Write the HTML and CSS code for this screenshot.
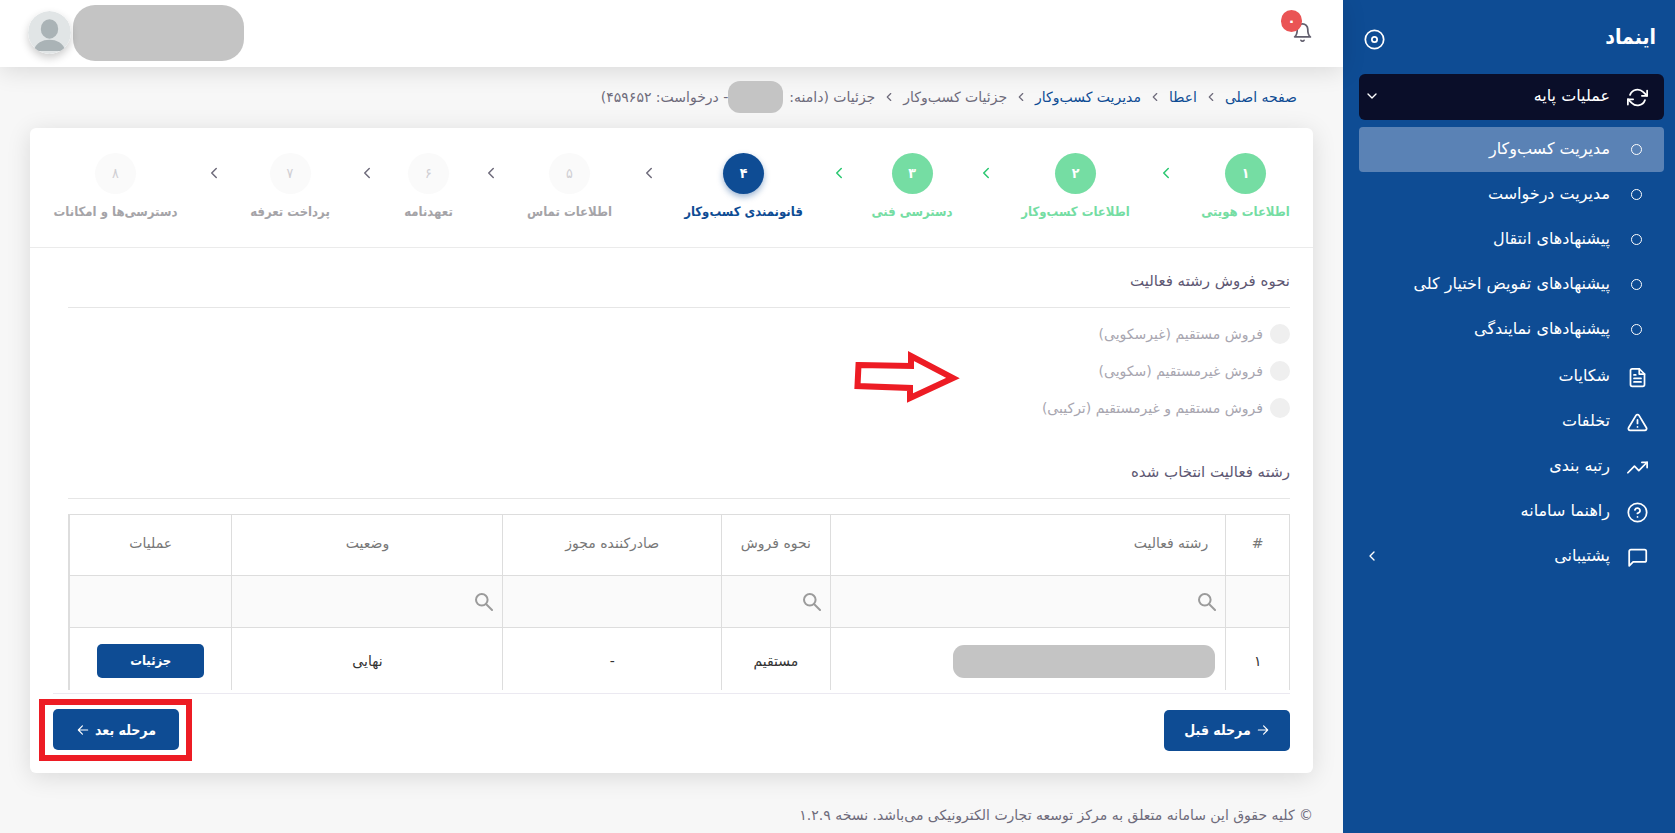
FILE: index.html
```html
<!DOCTYPE html>
<html lang="fa" dir="rtl">
<head>
<meta charset="utf-8">
<meta name="viewport" content="width=device-width, initial-scale=1">
<title>اینماد</title>
<link rel="stylesheet" href="styles.css">
</head>
<body>
<svg class="sprite" aria-hidden="true">
  <symbol id="chevron" viewBox="0 0 24 24"><polyline points="15 18 9 12 15 6"/></symbol>
  <symbol id="search" viewBox="0 0 18 18"><circle cx="6.800" cy="6.800" r="5.800"/><path d="M11 11 17 17"/></symbol>
</svg>
<div class="app">
  <aside class="sidebar">
    <div class="brand">
      <h1 class="brand-name">اینماد</h1>
      <button class="pin" type="button" aria-label="سنجاق منو">
        <svg class="icon" viewBox="0 0 24 24"><circle cx="12" cy="12" r="10.5"/><circle cx="12" cy="12" r="3"/></svg>
      </button>
    </div>
    <nav>
      <ul class="menu">
        <li>
          <a class="item open" href="#">
            <svg class="icon" viewBox="0 0 24 24"><polyline points="23 4 23 10 17 10"/><polyline points="1 20 1 14 7 14"/><path d="M3.51 9a9 9 0 0 1 14.85-3.36L23 10M1 14l4.64 4.36A9 9 0 0 0 20.49 15"/></svg>
            <span>عملیات پایه</span>
            <svg class="caret down" viewBox="0 0 24 24"><use href="#chevron"/></svg>
          </a>
          <ul class="submenu">
            <li><a class="item active" href="#"><i class="dot"></i><span>مدیریت کسب‌وکار</span></a></li>
            <li><a class="item" href="#"><i class="dot"></i><span>مدیریت درخواست</span></a></li>
            <li><a class="item" href="#"><i class="dot"></i><span>پیشنهادهای انتقال</span></a></li>
            <li><a class="item" href="#"><i class="dot"></i><span>پیشنهادهای تفویض اختیار کلی</span></a></li>
            <li><a class="item" href="#"><i class="dot"></i><span>پیشنهادهای نمایندگی</span></a></li>
          </ul>
        </li>
        <li><a class="item" href="#"><svg class="icon" viewBox="0 0 24 24"><path d="M14 2H6a2 2 0 0 0-2 2v16a2 2 0 0 0 2 2h12a2 2 0 0 0 2-2V8z"/><polyline points="14 2 14 8 20 8"/><path d="M16 13H8M16 17H8M10 9H8"/></svg><span>شکایات</span></a></li>
        <li><a class="item" href="#"><svg class="icon" viewBox="0 0 24 24"><path d="M10.29 3.86 1.82 18a2 2 0 0 0 1.71 3h16.94a2 2 0 0 0 1.71-3L13.71 3.86a2 2 0 0 0-3.42 0z"/><path d="M12 9v4M12 17h.01"/></svg><span>تخلفات</span></a></li>
        <li><a class="item" href="#"><svg class="icon" viewBox="0 0 24 24"><polyline points="23 6 13.5 15.5 8.5 10.5 1 18"/><polyline points="17 6 23 6 23 12"/></svg><span>رتبه بندی</span></a></li>
        <li><a class="item" href="#"><svg class="icon" viewBox="0 0 24 24"><circle cx="12" cy="12" r="10.5"/><path d="M9.09 9a3 3 0 0 1 5.83 1c0 2-3 3-3 3M12 17h.01"/></svg><span>راهنما سامانه</span></a></li>
        <li><a class="item" href="#"><svg class="icon" viewBox="0 0 24 24"><path d="M22 15a2 2 0 0 1-2 2H7l-4.500 4.500V5a2 2 0 0 1 2-2h15.500a2 2 0 0 1 2 2z"/></svg><span>پشتیبانی</span><svg class="caret" viewBox="0 0 24 24"><use href="#chevron"/></svg></a></li>
      </ul>
    </nav>
  </aside>

  <div class="page">
    <header class="topbar">
      <button class="bell" type="button" aria-label="اعلان‌ها">
        <svg class="icon" viewBox="0 0 24 24"><path d="M18 8A6 6 0 0 0 6 8c0 7-3 9-3 9h18s-3-2-3-9"/><path d="M13.73 21a2 2 0 0 1-3.460 0"/></svg>
        <span class="badge">۰</span>
      </button>
      <div class="user">
        <div class="user-name"></div>
        <svg class="avatar" viewBox="0 0 42 42"><circle cx="21" cy="21" r="21" fill="#e1e5e6"/><ellipse cx="21" cy="17.500" rx="8.500" ry="9.500" fill="#aab3b6"/><path d="M5 39c3-8 9-11 16-11s13 3 16 11z" fill="#aab3b6"/></svg>
      </div>
    </header>

    <main class="content">
      <nav class="breadcrumb">
        <a href="#">صفحه اصلی</a>
        <svg class="sep" viewBox="0 0 24 24"><use href="#chevron"/></svg>
        <a href="#">اعطا</a>
        <svg class="sep" viewBox="0 0 24 24"><use href="#chevron"/></svg>
        <a href="#">مدیریت کسب‌وکار</a>
        <svg class="sep" viewBox="0 0 24 24"><use href="#chevron"/></svg>
        <span>جزئیات کسب‌وکار</span>
        <svg class="sep" viewBox="0 0 24 24"><use href="#chevron"/></svg>
        <span class="crumb-last"><span>جزئیات (دامنه:</span><i class="mask"></i><span>- درخواست: ۴۵۹۶۵۲)</span></span>
      </nav>

      <section class="card">
        <div class="steps">
          <div class="step done"><span class="num">۱</span><span class="label">اطلاعات هویتی</span></div>
          <svg class="arrow done" viewBox="0 0 24 24"><use href="#chevron"/></svg>
          <div class="step done"><span class="num">۲</span><span class="label">اطلاعات کسب‌وکار</span></div>
          <svg class="arrow done" viewBox="0 0 24 24"><use href="#chevron"/></svg>
          <div class="step done"><span class="num">۳</span><span class="label">دسترسی فنی</span></div>
          <svg class="arrow done" viewBox="0 0 24 24"><use href="#chevron"/></svg>
          <div class="step current"><span class="num">۴</span><span class="label">قانونمندی کسب‌وکار</span></div>
          <svg class="arrow" viewBox="0 0 24 24"><use href="#chevron"/></svg>
          <div class="step"><span class="num">۵</span><span class="label">اطلاعات تماس</span></div>
          <svg class="arrow" viewBox="0 0 24 24"><use href="#chevron"/></svg>
          <div class="step"><span class="num">۶</span><span class="label">تعهدنامه</span></div>
          <svg class="arrow" viewBox="0 0 24 24"><use href="#chevron"/></svg>
          <div class="step"><span class="num">۷</span><span class="label">پرداخت تعرفه</span></div>
          <svg class="arrow" viewBox="0 0 24 24"><use href="#chevron"/></svg>
          <div class="step"><span class="num">۸</span><span class="label">دسترسی‌ها و امکانات</span></div>
        </div>

        <div class="body">
          <h2 class="title">نحوه فروش رشته فعالیت</h2>
          <div class="options">
            <label class="option"><input type="radio" name="sale" disabled><span>فروش مستقیم (غیرسکویی)</span></label>
            <label class="option"><input type="radio" name="sale" disabled><span>فروش غیرمستقیم (سکویی)</span></label>
            <label class="option"><input type="radio" name="sale" disabled><span>فروش مستقیم و غیرمستقیم (ترکیبی)</span></label>
            <svg class="pointer" viewBox="0 0 106 54"><path d="M4.500 15 57 16V6l42 22-43 20V38L3.500 36z"/></svg>
          </div>

          <h2 class="title">رشته فعالیت انتخاب شده</h2>
          <table class="grid">
            <colgroup><col class="c-no"><col class="c-field"><col class="c-sale"><col class="c-issuer"><col class="c-state"><col class="c-ops"></colgroup>
            <thead>
              <tr><th>#</th><th class="start">رشته فعالیت</th><th>نحوه فروش</th><th>صادرکننده مجوز</th><th>وضعیت</th><th>عملیات</th></tr>
              <tr class="filters">
                <td></td>
                <td><label class="filter"><svg viewBox="0 0 18 18"><use href="#search"/></svg><input type="text" aria-label="جستجو در رشته فعالیت"></label></td>
                <td><label class="filter"><svg viewBox="0 0 18 18"><use href="#search"/></svg><input type="text" aria-label="جستجو در نحوه فروش"></label></td>
                <td></td>
                <td><label class="filter"><svg viewBox="0 0 18 18"><use href="#search"/></svg><input type="text" aria-label="جستجو در وضعیت"></label></td>
                <td></td>
              </tr>
            </thead>
            <tbody>
              <tr><td>۱</td><td class="masked"><div class="field-mask"></div></td><td>مستقیم</td><td>-</td><td>نهایی</td><td><button class="btn small" type="button">جزئیات</button></td></tr>
            </tbody>
          </table>
        </div>

        <div class="actions">
          <button class="btn" type="button"><svg viewBox="0 0 24 24"><path d="M4 12h16M13 5l7 7-7 7"/></svg><span>مرحله قبل</span></button>
          <div class="next">
            <button class="btn" type="button"><span>مرحله بعد</span><svg viewBox="0 0 24 24"><path d="M20 12H4M11 5l-7 7 7 7"/></svg></button>
          </div>
        </div>
      </section>
    </main>
    <footer class="footer">© کلیه حقوق این سامانه متعلق به مرکز توسعه تجارت الکترونیکی می‌باشد. نسخه ۱.۲.۹</footer>
  </div>
</div>
</body>
</html>
```
FILE: styles.css
```css
:root {
  --blue: #0e4c94;
  --green: #75dda3;
  --text: #6e6b7b;
  --line: #dddddd;
  --condensed: "DejaVu Sans Condensed", "DejaVu Sans", sans-serif;
}

* { box-sizing: border-box; }

body {
  margin: 0;
  font-family: "DejaVu Sans", sans-serif;
  font-size: 14px;
  line-height: 20px;
  color: var(--text);
  background: #f7f7f7;
}

button, input { font: inherit; }
button { border: 0; padding: 0; background: none; cursor: pointer; }
a { text-decoration: none; }
ul { list-style: none; margin: 0; padding: 0; }
svg { fill: none; stroke: currentColor; stroke-width: 2; stroke-linecap: round; stroke-linejoin: round; flex: none; }
.sprite { display: none; }
.avatar { stroke: none; }

.app { display: flex; min-height: 100vh; }

/* Sidebar */
.sidebar { flex: none; width: 332px; padding: 0 11px 0 16px; background: var(--blue); color: #fff; }
.brand { display: flex; align-items: center; justify-content: space-between; height: 74px; padding: 0 8px 0 5px; }
.brand-name { margin: 0; font-family: var(--condensed); font-size: 21px; line-height: 28px; }
.pin { display: flex; margin-top: 5px; color: #fff; }
.icon { width: 21px; height: 21px; }
.item { display: flex; align-items: center; gap: 17px; height: 45px; padding: 0 16px 2px 5px; border-radius: 4px; color: #fff; font-size: 16px; }
.item .icon { margin-top: 3px; }
.item.open { height: 46px; border-radius: 6px; background: #0a0e29; }
.item.active { background: #5a82b5; }
.dot { width: 11px; height: 11px; margin: 2px 6px 0 4px; border: 1px solid #fff; border-radius: 50%; }
.caret { width: 16px; height: 16px; margin-inline-start: auto; }
.caret.down { transform: rotate(-90deg); }
.submenu { margin: 7px 0 2px; }

/* Top bar */
.page { flex: 1; min-width: 0; display: flex; flex-direction: column; }
.topbar { display: flex; align-items: center; justify-content: space-between; height: 67px; padding: 0 30px 2px 28px; background: #fff; box-shadow: 0 4px 24px rgba(0, 0, 0, 0.12); }
.bell { position: relative; display: flex; color: #625f6e; }
.badge { position: absolute; top: -12px; right: 11px; width: 21px; height: 22px; border-radius: 11px; background: #ea5455; color: #fff; font-size: 14px; font-weight: bold; line-height: 22px; text-align: center; }
.user { display: flex; align-items: center; gap: 2px; }
.user-name { width: 171px; height: 56px; border-radius: 22px; background: #c4c4c4; }
.avatar { width: 43px; height: 43px; border-radius: 50%; box-shadow: 0 4px 8px rgba(0, 0, 0, 0.2); }

/* Breadcrumb */
.content { padding: 14px 30px 0; }
.breadcrumb { display: flex; align-items: center; gap: 7px; height: 32px; padding: 0 16px; white-space: nowrap; }
.breadcrumb a { color: var(--blue); }
.sep { width: 14px; height: 14px; }
.crumb-last { display: flex; align-items: center; }
.mask { width: 55px; height: 32px; margin-inline-start: 6px; border-radius: 12px; background: #c4c4c4; }

/* Card */
.card { margin-top: 15px; border-radius: 6px; background: #fff; box-shadow: 0 4px 24px rgba(0, 0, 0, 0.12); padding-bottom: 12px; }
.steps { display: grid; grid-template-columns: 89fr 71fr 109fr 71fr 76fr 71fr 119fr 71fr 87fr 71fr 53fr 71fr 82fr 71fr 125fr; justify-items: center; height: 120px; padding: 25px 23px 0; border-bottom: 1px solid #ebebeb; }
.step { display: flex; flex-direction: column; align-items: center; gap: 8px; width: 0; color: #a5a4a8; font-family: var(--condensed); font-weight: bold; white-space: nowrap; font-size: 13px; }
.num { flex: none; width: 41px; height: 41px; border-radius: 50%; background: #fafafa; color: #cfced3; font-size: 14px; font-weight: normal; line-height: 40px; text-align: center; }
.step.done { color: var(--green); }
.step.done .num { background: var(--green); color: #fff; font-weight: bold; }
.step.current { color: var(--blue); }
.step.current .num { background: var(--blue); color: #fff; font-weight: bold; box-shadow: 0 3px 6px rgba(14, 76, 148, 0.4); }
.arrow { width: 18px; height: 18px; margin-top: 11px; }
.arrow.done { color: #28c76f; }

.body { padding: 20px 23px 3px 38px; }
.title { margin: 0; padding: 3px 0 16px; border-bottom: 1px solid #e6e6e6; font-size: 15px; font-weight: normal; line-height: 20px; color: #5e5873; }
.options { position: relative; display: flex; flex-direction: column; align-items: flex-start; gap: 17px; padding: 16px 0 41px; }
.option { display: flex; align-items: center; gap: 7px; height: 20px; color: #a8a6b0; }
.option input { appearance: none; flex: none; width: 20px; height: 20px; margin: 0; border-radius: 50%; background: #efefef; }
.pointer { position: absolute; top: 42px; right: 330px; width: 106px; height: 54px; color: #ed1c24; stroke-width: 6; stroke-linejoin: miter; }

.grid { width: 100%; margin-top: 15px; table-layout: fixed; border-collapse: separate; border-spacing: 0; border-inline-end: 1px solid var(--line); border-top: 1px solid var(--line); }
.c-no { width: 5.300%; } .c-field { width: 32.400%; } .c-sale { width: 8.900%; }
.c-issuer { width: 17.900%; } .c-state { width: 22.200%; } .c-ops { width: 13.300%; }
.grid th, .grid td { height: 61px; padding: 0 10px; border-inline-end: 1px solid var(--line); text-align: center; }
.grid th:first-child, .grid td:first-child { border-inline-start: 1px solid var(--line); }
.grid th { padding-bottom: 4px; border-bottom: 1px solid var(--line); color: #777; font-weight: normal; }
.grid th.start { padding-inline-start: 17px; text-align: start; }
.grid .filters td { height: 52px; padding: 0 9px; border-bottom: 1px solid var(--line); background: #fafafa; }
.grid tbody td { height: 62px; padding-top: 4px; color: #333; }
.filter { display: flex; align-items: center; gap: 6px; }
.filter svg { width: 18px; height: 18px; color: #9b9b9b; }
.filter input { flex: 1; min-width: 0; width: 0; border: 0; padding: 0; background: transparent; outline: 0; }
.field-mask { width: 262px; height: 33px; border-radius: 11px; background: #c4c4c4; }

.actions { display: flex; align-items: center; justify-content: space-between; margin: 0 23px; padding-top: 5px; border-top: 1px solid #ebe9f1; }
.btn { display: inline-flex; align-items: center; justify-content: center; gap: 5px; width: 126px; height: 41px; border-radius: 5px; background: var(--blue); color: #fff; font-family: var(--condensed); font-size: 14px; font-weight: bold; }
.btn svg { width: 14px; height: 14px; }
.btn.small { width: 107px; height: 34px; font-size: 13px; }
.next { display: flex; margin-left: -14px; padding: 4px 7px 5px 8px; border: 6px solid #ed1c24; }

.footer { padding: 32px 30px 9px; }
```
